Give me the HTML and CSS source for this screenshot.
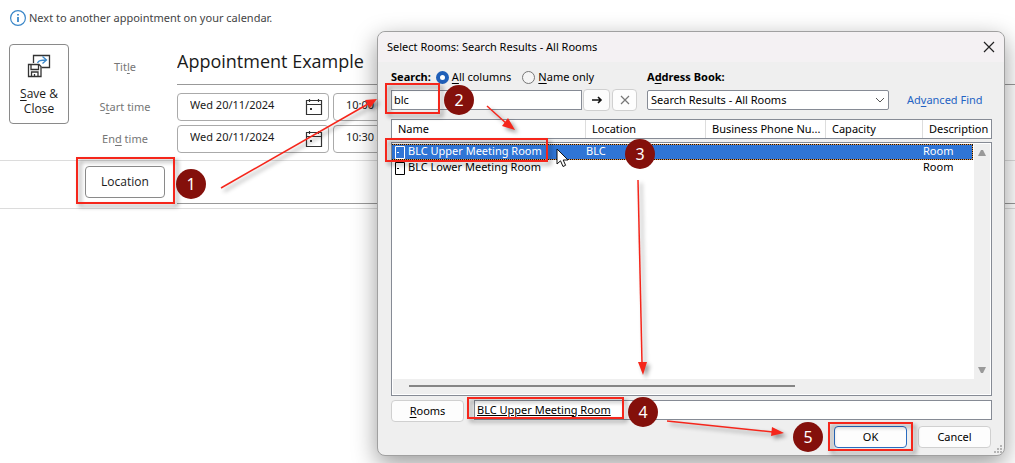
FILE: index.html
```
<!DOCTYPE html>
<html lang="en">
<head>
  <meta charset="UTF-8">
  <meta name="viewport" content="width=device-width, initial-scale=1.0">
  <title>Appointment Example</title>
  <link rel="stylesheet" href="styles.css">
</head>

<body>
  <!-- Appointment form -->
  <main class="appointment">
    <p class="notice">
      <svg width="18" height="18" viewBox="0 0 18 18" fill="none">
        <circle cx="9" cy="9" r="7.4" stroke="#3b87c8" stroke-width="1.2"/>
        <path d="M9 8v5M9 5v1.6" stroke="#3b87c8" stroke-width="1.8"/>
      </svg>
      Next to another appointment on your calendar.
    </p>

    <form class="form">
      <button type="button" class="save">
        <svg width="24" height="24" viewBox="0 0 24 24" fill="none" stroke="#333" stroke-width="1.3">
          <path d="M6.500 9V1.500h16v12h-8"/>
          <path d="M1.500 10.500h10.500l2 2v10h-12.500z" fill="#fff"/>
          <path d="M4 10.500v5h7.500v-5M4.500 22.500v-4.500h6.500v4.500M7.500 22v-2"/>
          <path d="M10.500 9c1-2.500 3-3 9-3M15.500 2.500l4 3.500-4 3.500" stroke="#3b87c8"/>
        </svg>
        <span><u>S</u>ave &amp;<br>Close</span>
      </button>

      <div class="fields">
        <label for="title">Tit<u>l</u>e</label>
        <input id="title" class="title-input" value="Appointment Example">

        <label for="start">S<u>t</u>art time</label>
        <div class="when">
          <div class="date-box">
            <input id="start" value="Wed 20/11/2024">
            <svg width="18" height="18" viewBox="0 0 18 18" fill="none" stroke="#333" stroke-width="1.2">
              <path d="M1.500 2.500h15v14h-15zM1.500 6.500h15M4.500 1v3M13.500 1v3"/>
              <path d="M6 10v2" stroke-width="2"/>
            </svg>
          </div>
          <input class="time-box" aria-label="Start hour" value="10:00 AM">
        </div>

        <label for="end">En<u>d</u> time</label>
        <div class="when">
          <div class="date-box">
            <input id="end" value="Wed 20/11/2024">
            <svg width="18" height="18" viewBox="0 0 18 18" fill="none" stroke="#333" stroke-width="1.2">
              <path d="M1.500 2.500h15v14h-15zM1.500 6.500h15M4.500 1v3M13.500 1v3"/>
              <path d="M6 10v2" stroke-width="2"/>
            </svg>
          </div>
          <input class="time-box" aria-label="End hour" value="10:30 AM">
        </div>
      </div>
    </form>

    <div class="location-row">
      <button type="button" class="location-btn">Location</button>
      <input class="location-input" aria-label="Location">
    </div>
  </main>

  <!-- Select Rooms dialog -->
  <div class="dialog" role="dialog" aria-labelledby="dialog-title">
    <header class="titlebar">
      <h1 id="dialog-title">Select Rooms: Search Results - All Rooms</h1>
      <button type="button" class="close" aria-label="Close">
        <svg width="12" height="12" viewBox="0 0 12 12" stroke="#222" stroke-width="1.2"><path d="M1 1l10 10M11 1L1 11"/></svg>
      </button>
    </header>

    <div class="dialog-body">
      <div class="search">
        <div class="search-col">
          <div class="options">
            <label for="query" class="strong"><u>S</u>earch:</label>
            <label class="option"><input type="radio" name="scope" checked><span><u>A</u>ll columns</span></label>
            <label class="option"><input type="radio" name="scope"><span><u>N</u>ame only</span></label>
          </div>
          <div class="query-row">
            <input id="query" class="box query" value="blc">
            <button type="button" class="btn go" aria-label="Go">
              <svg width="12" height="10" viewBox="0 0 12 10" fill="none" stroke="#111" stroke-width="1.6"><path d="M1 5h9M7 2l3 3-3 3"/></svg>
            </button>
            <button type="button" class="btn clear" aria-label="Clear">
              <svg width="10" height="10" viewBox="0 0 10 10" stroke="#777" stroke-width="1.2"><path d="M1 1l8 8M9 1L1 9"/></svg>
            </button>
          </div>
        </div>

        <div class="book-col">
          <label for="book" class="strong">A<u>d</u>dress Book:</label>
          <div class="select-wrap">
            <select id="book" class="box">
              <option>Search Results - All Rooms</option>
            </select>
            <svg class="chevron" width="10" height="6" viewBox="0 0 10 6" fill="none" stroke="#555"><path d="M1 1l4 4 4-4"/></svg>
          </div>
        </div>

        <a href="#" class="advanced">Ad<u>v</u>anced Find</a>
      </div>

      <div class="results">
        <table>
          <thead>
            <tr>
              <th>Name</th>
              <th>Location</th>
              <th>Business Phone Nu...</th>
              <th>Capacity</th>
              <th>Description</th>
            </tr>
          </thead>
          <tbody>
            <tr class="selected">
              <td><svg width="10" height="13" viewBox="0 0 10 13" fill="none" stroke="currentColor"><path d="M.5.500h9v12h-9zM2 6.500h2"/></svg>BLC Upper Meeting Room</td>
              <td>BLC</td>
              <td></td>
              <td></td>
              <td>Room</td>
            </tr>
            <tr>
              <td><svg width="10" height="13" viewBox="0 0 10 13" fill="none" stroke="currentColor"><path d="M.5.500h9v12h-9zM2 6.500h2"/></svg>BLC Lower Meeting Room</td>
              <td></td>
              <td></td>
              <td></td>
              <td>Room</td>
            </tr>
          </tbody>
        </table>
        <div class="vscroll">
          <svg width="8" height="6" viewBox="0 0 8 6" fill="#999"><path d="M3 0h2l3 6H0z"/></svg>
          <svg width="8" height="6" viewBox="0 0 8 6" fill="#999"><path d="M0 0h8L5 6H3z"/></svg>
        </div>
        <div class="hscroll"><div class="thumb"></div></div>
      </div>

      <div class="rooms-row">
        <button type="button" class="btn wide"><span><u>R</u>ooms</span></button>
        <input class="box rooms-input" aria-label="Rooms" value="BLC Upper Meeting Room">
      </div>

      <footer class="actions">
        <button type="button" class="btn wide primary">OK</button>
        <button type="button" class="btn wide">Cancel</button>
      </footer>
    </div>

    <svg class="grip" width="9" height="9" viewBox="0 0 9 9" fill="#b5b5b5">
      <path d="M6 0h2v2H6zM3 3h2v2H3zM6 3h2v2H6zM0 6h2v2H0zM3 6h2v2H3zM6 6h2v2H6z"/>
    </svg>
  </div>

  <!-- Mouse pointer -->
  <svg class="pointer" width="14" height="20" viewBox="0 0 14 20" fill="#fff" stroke="#111">
    <path d="M1 1v15l3.500-3.200L7 18.500l2.600-1.200L7.200 12H12z"/>
  </svg>

  <!-- Step annotations -->
  <svg class="marks" width="1015" height="463" viewBox="0 0 1015 463">
    <g class="frames">
      <rect x="77" y="158" width="97" height="45"/>
      <rect x="386" y="84" width="53" height="29"/>
      <rect x="386" y="139" width="161" height="22"/>
      <rect x="468" y="398" width="155" height="20"/>
      <rect x="829" y="423" width="83" height="27"/>
    </g>
    <g class="arrows">
      <path d="M221 188L368 104"/>
      <path d="M487 106L507 124"/>
      <path d="M638 180L642 363"/>
      <path d="M667 421L773 432"/>
      <path class="head" d="M377 99L370 108 365 100z"/>
      <path class="head" d="M515 130L502 126 508 118z"/>
      <path class="head" d="M643 375L638 362 647 362z"/>
      <path class="head" d="M784 433L771 436 772 427z"/>
    </g>
  </svg>
  <span class="step step-1">1</span>
  <span class="step step-2">2</span>
  <span class="step step-3">3</span>
  <span class="step step-4">4</span>
  <span class="step step-5">5</span>
</body>
</html>
```
FILE: styles.css
```
/* Reset & General */
* {
  margin: 0;
  padding: 0;
  box-sizing: border-box;
}

body {
  position: relative;
  min-height: 100vh;
  overflow: hidden;
  background-color: #fff;
  color: #1a1a1a;
  font-family: "Noto Sans", "Open Sans", sans-serif;
  font-size: 11px;
  line-height: 16px;
}

button,
input,
select {
  font: inherit;
  color: inherit;
}

svg {
  display: block;
  flex: none;
}

u {
  text-underline-offset: 2px;
}

/* Appointment form */
.appointment {
  padding-top: 9px;
}

.notice {
  display: flex;
  align-items: center;
  gap: 2px;
  height: 18px;
  padding-left: 9px;
  color: #444;
}

.form {
  display: flex;
  align-items: flex-start;
  gap: 16px;
  padding: 17px 0 7px 9px;
  border-bottom: 1px solid #dcdcdc;
}

.save {
  display: flex;
  flex-direction: column;
  align-items: center;
  gap: 8px;
  width: 60px;
  height: 80px;
  padding-top: 9px;
  border: 1px solid #8a8a8a;
  border-radius: 4px;
  background-color: #fff;
  font-family: "Open Sans", sans-serif;
  font-size: 12px;
  line-height: 15px;
}

.fields {
  flex: 1;
  display: grid;
  grid-template-columns: 80px 1fr;
  column-gap: 12px;
  row-gap: 4px;
  align-items: center;
}

.fields label {
  color: #767676;
  text-align: center;
}

.title-input {
  width: 100%;
  height: 41px;
  margin-bottom: 4px;
  padding-bottom: 6px;
  border: 0;
  border-bottom: 1px solid #999;
  font-family: "Open Sans", sans-serif;
  font-size: 18px;
}

.when {
  display: flex;
  gap: 4px;
}

.date-box,
.time-box {
  height: 28px;
  border: 1px solid #aaa;
  border-radius: 4px;
  padding: 0 12px;
  background-color: #fff;
}

.date-box {
  display: flex;
  align-items: center;
  width: 152px;
  padding-right: 5px;
}

.date-box input {
  flex: 1;
  min-width: 0;
  height: 26px;
  padding-bottom: 5px;
  border: 0;
}

.time-box {
  width: 100px;
  padding-bottom: 5px;
}

.location-row {
  display: flex;
  align-items: flex-start;
  gap: 12px;
  height: 48px;
  padding: 5px 0 0 85px;
  border-bottom: 1px solid #dcdcdc;
}

.location-btn {
  width: 80px;
  height: 32px;
  border: 1px solid #8a8a8a;
  border-radius: 4px;
  background-color: #fff;
  font-family: "Open Sans", sans-serif;
  font-size: 12px;
}

.location-input {
  flex: 1;
  height: 38px;
  border: 0;
  border-bottom: 1px solid #999;
}

/* Dialog */
.dialog {
  position: absolute;
  top: 31px;
  left: 377px;
  width: 628px;
  border: 1px solid #a0a0a0;
  border-radius: 8px;
  background-color: #efefef;
  color: #000;
  box-shadow: 0 8px 24px rgba(0, 0, 0, 0.4);
}

.titlebar {
  display: flex;
  justify-content: space-between;
  align-items: center;
  height: 30px;
  padding: 0 9px;
  border-radius: 8px 8px 0 0;
  background-color: #f4f1f3;
}

.titlebar h1 {
  font-size: 11px;
  font-weight: normal;
}

.close {
  padding: 0 0 1px;
  border: 0;
  background: none;
  width: 12px;
}

.dialog-body {
  padding: 7px 12px 7px 13px;
}

.box {
  border: 1px solid #868b95;
  background-color: #fff;
}

.btn {
  display: flex;
  align-items: center;
  justify-content: center;
  height: 22px;
  border: 1px solid #d0d0d0;
  border-radius: 4px;
  background-color: #fdfdfd;
}

.wide {
  width: 73px;
}

.primary {
  border-color: #2a6cc0;
}

.strong {
  font-weight: bold;
}

/* Search controls */
.search {
  display: flex;
  align-items: flex-end;
}

.search-col {
  width: 256px;
}

.options {
  display: flex;
  align-items: center;
  height: 16px;
  gap: 5px;
}

.option {
  display: flex;
  align-items: center;
  gap: 3px;
}

.option + .option {
  margin-left: 6px;
}

.option input {
  appearance: none;
  width: 13px;
  height: 13px;
  border: 1px solid #777;
  border-radius: 50%;
  background-color: #f5f5f5;
}

.option input:checked {
  border: 4px solid #1f5fb8;
  background-color: #fff;
}

.query-row {
  display: flex;
  align-items: center;
  height: 22px;
  margin-top: 4px;
}

.query {
  width: 191px;
  height: 20px;
  padding: 0 0 2px 2px;
}

.go {
  width: 27px;
  margin-left: 1px;
}

.clear {
  width: 25px;
  margin-left: 2px;
}

.book-col {
  width: 242px;
}

.book-col label {
  display: block;
}

.select-wrap {
  position: relative;
  height: 22px;
  margin-top: 4px;
  padding-top: 1px;
}

.select-wrap select {
  appearance: none;
  width: 100%;
  height: 20px;
  padding-left: 3px;
  border-radius: 2px;
}

.chevron {
  position: absolute;
  top: 8px;
  right: 4px;
}

.advanced {
  margin: 0 0 3px 18px;
  color: #2463c4;
  text-decoration: none;
}

/* Results list */
.results {
  position: relative;
  margin-top: 8px;
}

.results table,
.results thead,
.results tbody {
  display: block;
}

.results tr {
  display: grid;
  grid-template-columns: 194px 120px 120px 97px 1fr;
}

.results thead {
  border: 1px solid #868b95;
  background-color: #fff;
}

.results th {
  padding-left: 6px;
  border-right: 1px solid #ddd;
  font-weight: normal;
  line-height: 18px;
  text-align: left;
  white-space: nowrap;
}

.results th:last-child {
  border-right: 0;
}

.results tbody {
  height: 254px;
  margin-top: 3px;
  padding: 1px 18px 0 0;
  border: 1px solid #868b95;
  background-color: #fff;
}

.results tbody tr {
  height: 16px;
  border: 1px solid transparent;
  border-left-width: 0;
}

.results tbody tr.selected {
  border: 1px dotted #111;
  border-left-width: 0;
  background: linear-gradient(#2f75d6, #2f75d6) padding-box, #e8964a;
  color: #fff;
}

.results td {
  display: flex;
  align-items: center;
  gap: 3px;
  height: 14px;
  line-height: 12px;
  padding-bottom: 2px;
}

.results td svg {
  margin-top: 2px;
}

.results td:first-child {
  padding-left: 3px;
}

.vscroll {
  position: absolute;
  top: 25px;
  right: 2px;
  bottom: 17px;
  width: 16px;
  display: flex;
  flex-direction: column;
  align-items: center;
  justify-content: space-between;
  padding: 6px 0 6px;
  background-color: #efefef;
}

.hscroll {
  position: absolute;
  left: 2px;
  right: 2px;
  bottom: 2px;
  height: 15px;
  padding: 6px 195px 0 16px;
  background-color: #efefef;
}

.thumb {
  height: 2px;
  background-color: #858585;
}

/* Bottom rows */
.rooms-row {
  display: flex;
  align-items: flex-start;
  gap: 10px;
  margin-top: 4px;
}

.rooms-input {
  flex: 1;
  height: 20px;
  padding: 0 0 2px 2px;
  text-decoration: underline;
}

.actions {
  display: flex;
  justify-content: flex-end;
  gap: 11px;
  margin-top: 4px;
  padding-right: 1px;
}

.grip {
  position: absolute;
  right: 1px;
  bottom: 1px;
}

/* Pointer and step annotations */
.pointer {
  position: absolute;
  top: 148px;
  left: 556px;
}

.marks {
  position: absolute;
  top: 0;
  left: 0;
  pointer-events: none;
  filter: drop-shadow(3px 3px 2px rgba(0, 0, 0, 0.4));
}

.frames {
  fill: none;
  stroke: #f5261b;
  stroke-width: 2;
}

.arrows {
  fill: none;
  stroke: #f5261b;
  stroke-width: 1.5;
}

.arrows .head {
  fill: #f5261b;
  stroke: none;
}

.step {
  position: absolute;
  width: 30px;
  height: 30px;
  border-radius: 50%;
  background-color: #84100b;
  color: #fff;
  font-size: 16px;
  line-height: 30px;
  text-align: center;
}

.step-1 {
  top: 169px;
  left: 176px;
}

.step-2 {
  top: 85px;
  left: 444px;
}

.step-3 {
  top: 139px;
  left: 625px;
}

.step-4 {
  top: 397px;
  left: 628px;
}

.step-5 {
  top: 422px;
  left: 793px;
}
```
